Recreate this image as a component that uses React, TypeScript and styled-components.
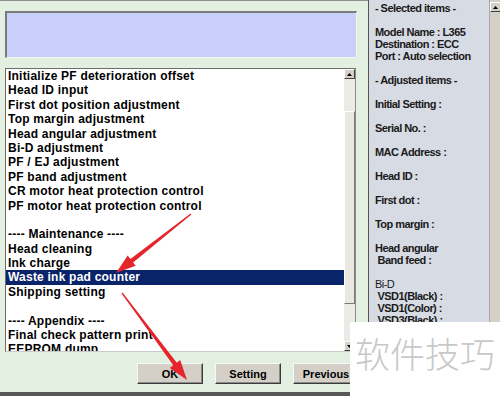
import React from 'react'
import styled, { createGlobalStyle, css } from 'styled-components'

const GlobalStyle = createGlobalStyle`
  html, body {
    margin: 0;
    padding: 0;
    background: #ffffff;
    font-family: 'Liberation Sans', Arial, sans-serif;
  }
`

const Frame = styled.div`
  position: relative;
  display: flex;
  width: 500px;
  height: 396px;
  overflow: hidden;
`

const LeftPane = styled.div`
  width: 368px;
  height: 396px;
  box-sizing: border-box;
  display: flex;
  flex-direction: column;
  background: #e3efe1;
  border-top: 1px solid #8c8c8c;
  padding: 10px 0 0 5px;
`

const InfoBox = styled.div`
  width: 352px;
  height: 47px;
  box-sizing: border-box;
  background: #c8cff8;
  border-top: 2px solid #7a7a7a;
  border-left: 2px solid #7a7a7a;
  border-bottom: 1px solid #f4f4f4;
  border-right: 1px solid #f4f4f4;
`

const ListBox = styled.div`
  margin-top: 10px;
  width: 351px;
  height: 284px;
  box-sizing: border-box;
  display: flex;
  background: #ffffff;
  border-top: 1px solid #6c6c6c;
  border-left: 1px solid #6c6c6c;
  border-right: 1px solid #8a8a8a;
  border-bottom: 1px solid #c8c8c8;
`

const ListBody = styled.div`
  flex: 1;
  overflow: hidden;
`

const Row = styled.div<{ selected?: boolean }>`
  height: 14.4px;
  line-height: 14.4px;
  padding-left: 2px;
  font-size: 12px;
  font-weight: bold;
  letter-spacing: 0.22px;
  white-space: pre;
  color: #000000;
  ${(props) =>
    props.selected &&
    css`
      background: #0a246a;
      color: #ffffff;
    `}
`

const VScroll = styled.div<{ track: string }>`
  width: 11px;
  display: flex;
  flex-direction: column;
  background: ${(props) => props.track};
`

const ArrowBtn = styled.div`
  width: 11px;
  height: 10px;
  box-sizing: border-box;
  display: flex;
  align-items: center;
  justify-content: center;
  background: #d4d0c8;
  border: 1px solid;
  border-color: #ffffff #404040 #404040 #ffffff;
`

const Thumb = styled.div`
  margin-top: 32px;
  height: 193px;
  box-sizing: border-box;
  background: #e9e7e2;
  border: 1px solid;
  border-color: #ffffff #7a7a7a #7a7a7a #ffffff;
`

const ScrollGap = styled.div`
  flex: 1;
`

const ButtonRow = styled.div`
  margin-top: 11px;
  display: flex;
  gap: 12px;
  padding-left: 132px;
`

const Btn = styled.div`
  width: 66px;
  height: 21px;
  box-sizing: border-box;
  display: flex;
  align-items: center;
  justify-content: center;
  background: #d4d0c8;
  border: 1px solid;
  border-color: #f8f8f8 #3a3a3a #3a3a3a #f8f8f8;
  box-shadow: inset -1px -1px 0 #8a8a8a;
  font-size: 11px;
  font-weight: bold;
  color: #000000;
`

const BottomBar = styled.div`
  margin-top: auto;
  margin-left: -5px;
  height: 4px;
  background: #575757;
`

const RightPane = styled.div`
  flex: 1;
  display: flex;
  background: #d7dbe4;
  border-left: 1px solid #555555;
`

const PanelText = styled.div`
  flex: 1;
  padding: 1.5px 0 0 6px;
  font-size: 11px;
  font-weight: bold;
  letter-spacing: -0.55px;
  line-height: 12px;
  white-space: pre;
  color: #1a1a1a;
`

const PanelLine = styled.div<{ light?: boolean }>`
  height: 12px;
  font-weight: ${(props) => (props.light ? 'normal' : 'bold')};
`

const RightScroll = styled.div`
  width: 10px;
  border-left: 1px solid #a8a8a8;
  background: #d4d0c8;
  padding-top: 2px;
`

const Watermark = styled.div`
  position: absolute;
  left: 350px;
  top: 322px;
  right: 0;
  bottom: 0;
  background: #ffffff;
  padding: 7px 0 0 5px;
  font-family: 'Noto Sans CJK SC', sans-serif;
  font-weight: 300;
  font-size: 35px;
  line-height: 48px;
  color: #c8c8c8;
  white-space: nowrap;
`

const Overlay = styled.svg`
  position: absolute;
  left: 0;
  top: 0;
  pointer-events: none;
`

const listItems = [
  'Initialize PF deterioration offset',
  'Head ID input',
  'First dot position adjustment',
  'Top margin adjustment',
  'Head angular adjustment',
  'Bi-D adjustment',
  'PF / EJ adjustment',
  'PF band adjustment',
  'CR motor heat protection control',
  'PF motor heat protection control',
  '',
  '---- Maintenance ----',
  'Head cleaning',
  'Ink charge',
  'Waste ink pad counter',
  'Shipping setting',
  '',
  '---- Appendix ----',
  'Final check pattern print',
  'EEPROM dump',
]

const panelLines: { text: string; light?: boolean }[] = [
  { text: '- Selected items -' },
  { text: '' },
  { text: 'Model Name : L365' },
  { text: 'Destination : ECC' },
  { text: 'Port : Auto selection' },
  { text: '' },
  { text: '- Adjusted items -' },
  { text: '' },
  { text: 'Initial Setting :' },
  { text: '' },
  { text: 'Serial No. :' },
  { text: '' },
  { text: 'MAC Address :' },
  { text: '' },
  { text: 'Head ID :' },
  { text: '' },
  { text: 'First dot :' },
  { text: '' },
  { text: 'Top margin :' },
  { text: '' },
  { text: 'Head angular' },
  { text: ' Band feed :' },
  { text: '' },
  { text: 'Bi-D', light: true },
  { text: ' VSD1(Black) :' },
  { text: ' VSD1(Color) :' },
  { text: ' VSD3(Black) :' },
]

function Tri({ down }: { down?: boolean }) {
  return (
    <svg width="5" height="3" viewBox="0 0 5 3">
      <polygon points={down ? '0,0 5,0 2.5,3' : '2.5,0 5,3 0,3'} fill="#000" />
    </svg>
  )
}

// tapered red annotation arrow, tail -> tip
function arrowPoints(x1: number, y1: number, x2: number, y2: number) {
  const head = 20
  const hw = 6.5
  const neck = 2.2
  const tail = 0.6
  const dx = x2 - x1
  const dy = y2 - y1
  const len = Math.hypot(dx, dy)
  const ux = dx / len
  const uy = dy / len
  const nx = -uy
  const ny = ux
  const bx = x2 - ux * head
  const by = y2 - uy * head
  const pts = [
    [x1 + nx * tail, y1 + ny * tail],
    [bx + nx * neck, by + ny * neck],
    [bx + nx * hw, by + ny * hw],
    [x2, y2],
    [bx - nx * hw, by - ny * hw],
    [bx - nx * neck, by - ny * neck],
    [x1 - nx * tail, y1 - ny * tail],
  ]
  return pts.map((p) => `${p[0].toFixed(1)},${p[1].toFixed(1)}`).join(' ')
}

export default function App() {
  return (
    <>
      <GlobalStyle />
      <Frame>
        <LeftPane>
          <InfoBox />
          <ListBox>
            <ListBody>
              {listItems.map((item, i) => (
                <Row key={i} selected={item === 'Waste ink pad counter'}>
                  {item}
                </Row>
              ))}
            </ListBody>
            <VScroll track="#eceae6">
              <ArrowBtn>
                <Tri />
              </ArrowBtn>
              <Thumb />
              <ScrollGap />
              <ArrowBtn>
                <Tri down />
              </ArrowBtn>
            </VScroll>
          </ListBox>
          <ButtonRow>
            <Btn>OK</Btn>
            <Btn>Setting</Btn>
            <Btn>Previous</Btn>
          </ButtonRow>
          <BottomBar />
        </LeftPane>
        <RightPane>
          <PanelText>
            {panelLines.map((line, i) => (
              <PanelLine key={i} light={line.light}>
                {line.text}
              </PanelLine>
            ))}
          </PanelText>
          <RightScroll>
            <ArrowBtn>
              <Tri />
            </ArrowBtn>
          </RightScroll>
        </RightPane>
        <Overlay width="500" height="396" viewBox="0 0 500 396">
          <polygon points={arrowPoints(191, 214, 116, 273)} fill="#e5242b" />
          <polygon points={arrowPoints(122, 293, 187, 380)} fill="#e5242b" />
        </Overlay>
        <Watermark>软件技巧</Watermark>
      </Frame>
    </>
  )
}
